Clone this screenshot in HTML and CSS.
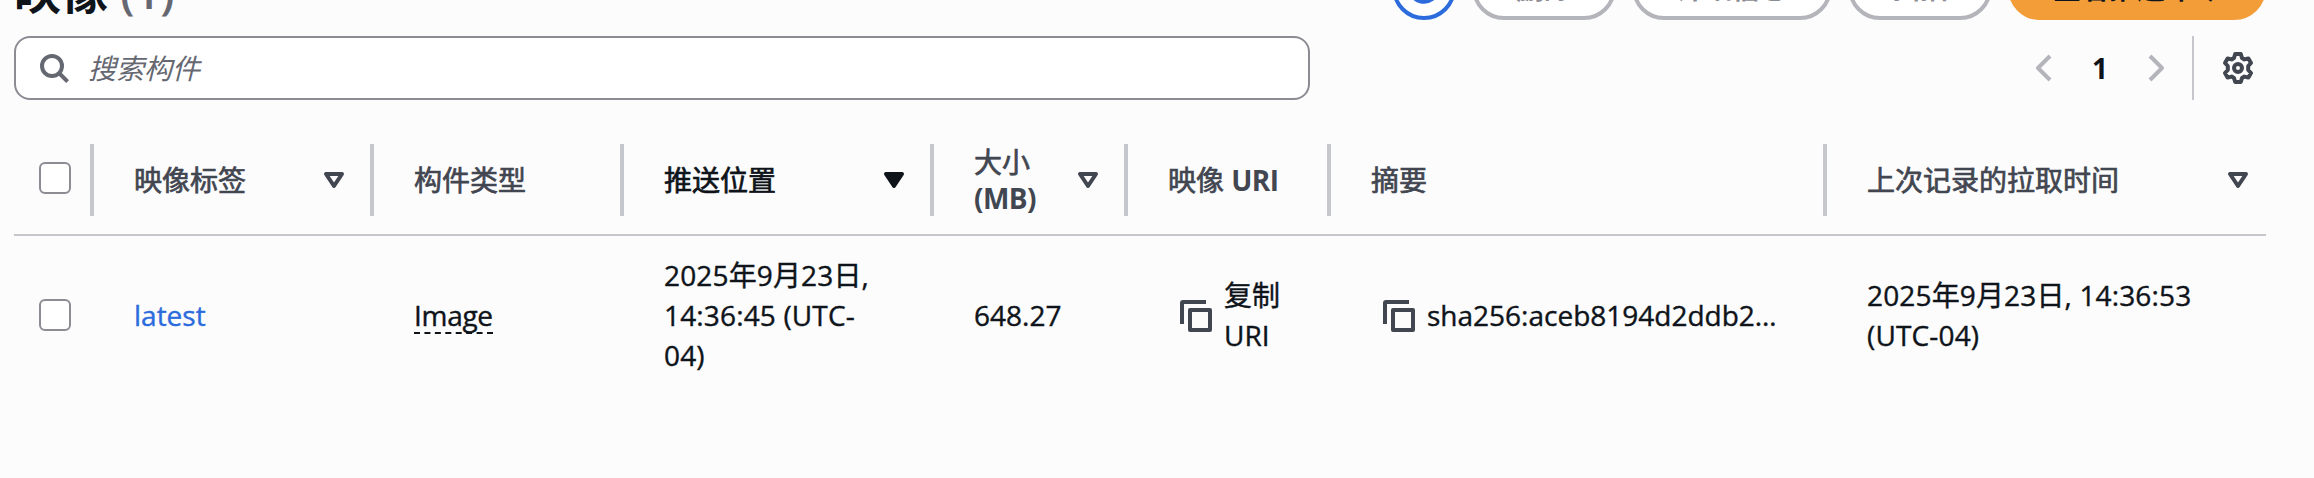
FILE: index.html
```html
<!DOCTYPE html>
<html lang="zh-CN">
<head>
<meta charset="utf-8">
<title>映像</title>
<link rel="stylesheet" href="styles.css">
</head>
<body>
<svg class="defs" width="0" height="0">
  <defs>
    <symbol id="sort" viewBox="0 0 16 16"><path d="M4 5h8l-4 6z" fill="none" stroke="currentColor" stroke-width="2" stroke-linejoin="round"/></symbol>
    <symbol id="sorted" viewBox="0 0 16 16"><path d="M4 5h8l-4 6z" fill="currentColor" stroke="currentColor" stroke-width="2" stroke-linejoin="round"/></symbol>
    <symbol id="copy" viewBox="0 0 16 16"><path d="M1 12V1.5Q1 1 1.5 1H13M5 5h10v10H5z" fill="none" stroke="currentColor" stroke-width="2" stroke-linejoin="round"/></symbol>
  </defs>
</svg>
<main class="panel">
  <header class="panel-header">
    <h2 class="title">映像 <span class="counter">(1)</span></h2>
    <div class="actions">
      <button class="btn btn-refresh" aria-label="刷新"><svg class="icon" viewBox="0 0 16 16"><path d="M15 8a7 7 0 1 1-2-5M15 1v5h-5" fill="none" stroke="currentColor" stroke-width="2"/></svg></button>
      <button class="btn btn-delete">删除</button>
      <button class="btn btn-details">详细信息</button>
      <button class="btn btn-scan">扫描</button>
      <button class="btn btn-primary">查看推送命令</button>
    </div>
  </header>
  <div class="tools">
    <div class="search">
      <svg class="icon" viewBox="0 0 16 16"><circle cx="7" cy="7" r="5" fill="none" stroke="currentColor" stroke-width="2"/><path d="M10.500 10.500l4.300 4.300" stroke="currentColor" stroke-width="2"/></svg>
      <span class="placeholder">搜索构件</span>
    </div>
    <nav class="pager">
      <svg class="icon arrow" viewBox="0 0 16 16"><path d="M11 2L5 8l6 6" fill="none" stroke="currentColor" stroke-width="2" stroke-linejoin="round"/></svg>
      <span class="page">1</span>
      <svg class="icon arrow" viewBox="0 0 16 16"><path d="M5 2l6 6-6 6" fill="none" stroke="currentColor" stroke-width="2" stroke-linejoin="round"/></svg>
      <div class="prefs"><svg class="icon" viewBox="0 0 16 16"><path d="M6.600 1h2.800l.6 2 1.200.7 2-.5 1.300 2.300L13.100 7v2l1.400 1.500-1.300 2.300-2-.5-1.200.7-.6 2H6.600l-.6-2-1.200-.7-2 .5-1.300-2.300L2.900 9V7L1.500 5.500l1.300-2.300 2 .5L6 3z" fill="none" stroke="currentColor" stroke-width="2" stroke-linejoin="round"/><circle cx="8" cy="8" r="2" fill="none" stroke="currentColor" stroke-width="2"/></svg></div>
    </nav>
  </div>
  <div class="table">
    <div class="row head">
      <div class="cell select"><span class="checkbox"></span></div>
      <div class="cell">映像标签<svg class="icon sort"><use href="#sort"/></svg></div>
      <div class="cell">构件类型</div>
      <div class="cell active">推送位置<svg class="icon sort"><use href="#sorted"/></svg></div>
      <div class="cell"><span>大小<br><b>(MB)</b></span><svg class="icon sort"><use href="#sort"/></svg></div>
      <div class="cell"><span>映像 <b>URI</b></span></div>
      <div class="cell">摘要</div>
      <div class="cell last">上次记录的拉取时间<svg class="icon sort"><use href="#sort"/></svg></div>
    </div>
    <div class="row body">
      <div class="cell select"><span class="checkbox"></span></div>
      <div class="cell"><a class="link">latest</a></div>
      <div class="cell"><span class="dashed">Image</span></div>
      <div class="cell date">2025年9月23日,<br>14:36:45 (UTC-<br>04)</div>
      <div class="cell">648.27</div>
      <div class="cell copy"><svg class="icon"><use href="#copy"/></svg><span>复制<br>URI</span></div>
      <div class="cell copy"><svg class="icon"><use href="#copy"/></svg><span class="digest">sha256:aceb8194d2ddb2…</span></div>
      <div class="cell last date">2025年9月23日, 14:36:53<br>(UTC-04)</div>
    </div>
  </div>
</main>
</body>
</html>
```

FILE: styles.css
```css
* { box-sizing: border-box; }
body {
  margin: 0;
  height: 478px;
  overflow: hidden;
  background: #fcfcfd;
  color: #0f141a;
  font: 28px/40px "Open Sans", "Noto Sans CJK SC", sans-serif;
}
.defs { display: block; }
.panel { width: 2252px; margin-left: 14px; }
.icon { width: 32px; height: 32px; flex: none; display: block; }
.panel-header { display: flex; justify-content: space-between; height: 64px; margin-top: -44px; }
.title { margin: 0; font-size: 47px; line-height: 70px; font-weight: 700; white-space: nowrap; }
.counter { font-size: 45px; font-weight: 600; color: #656871; }
.actions { display: flex; gap: 16px; }
.btn {
  height: 64px;
  padding: 0 0 1px;
  border: 4px solid #b4b4bb;
  border-radius: 32px;
  background: #fff;
  color: #8c8c94;
  font: 700 28px/40px "Open Sans", "Noto Sans CJK SC", sans-serif;
}
.btn-refresh { width: 64px; padding: 0 12px; border-color: #2b6bdc; color: #2b6bdc; }
.btn-delete { width: 144px; }
.btn-details { width: 200px; }
.btn-scan { width: 144px; }
.btn-primary { width: 258px; background: #f29d38; border-color: #f29d38; color: #0f141a; }
.tools { display: flex; justify-content: space-between; margin-top: 16px; height: 64px; }
.search {
  display: flex;
  align-items: center;
  gap: 18px;
  width: 1296px;
  padding-left: 22px;
  border: 2px solid #8c8c94;
  border-radius: 16px;
  background: #fff;
  color: #656871;
}
.placeholder { font-style: italic; }
.pager { display: flex; align-items: center; color: #424650; }
.arrow { color: #b4b4bb; }
.page { width: 80px; text-align: center; font-weight: 700; color: #0f141a; }
.prefs { display: flex; align-items: center; height: 64px; margin-left: 20px; padding: 0 12px 0 28px; border-left: 2px solid #c6c6cd; }
.table { margin-top: 26px; }
.row { display: grid; grid-template-columns: 80px 280px 250px 310px 194px 203px 496px 439px; }
.cell { position: relative; display: flex; align-items: center; padding-left: 40px; white-space: nowrap; }
.head { height: 110px; border-bottom: 2px solid #c6c6cd; color: #424650; line-height: 36px; -webkit-text-stroke: 0.7px currentColor; }
.head b { font-weight: 700; letter-spacing: -0.6px; -webkit-text-stroke: 0; }
.head .cell:not(.last)::after { content: ""; position: absolute; right: 0; top: 18px; width: 4px; height: 72px; background: #c6c6cd; }
.head .active { color: #0f141a; }
.sort { margin-left: auto; margin-right: 24px; }
.last .sort { margin-right: 12px; }
.body { height: 158px; -webkit-text-stroke: 0.4px currentColor; }
.cell.select { padding-left: 25px; }
.checkbox { width: 32px; height: 32px; margin-bottom: 4px; border: 2px solid #8c8c94; border-radius: 6px; background: #fff; }
.body .checkbox { margin-bottom: 0; }
.body .icon { margin-top: 2px; }
.link { color: #2b6bdc; }
.dashed { margin-top: 2px; line-height: 34px; border-bottom: 2px dashed #0f141a; letter-spacing: -0.3px; }
.date { letter-spacing: 0.15px; }
.copy { gap: 12px; padding-left: 52px; }
.copy .icon { color: #424650; }
```
